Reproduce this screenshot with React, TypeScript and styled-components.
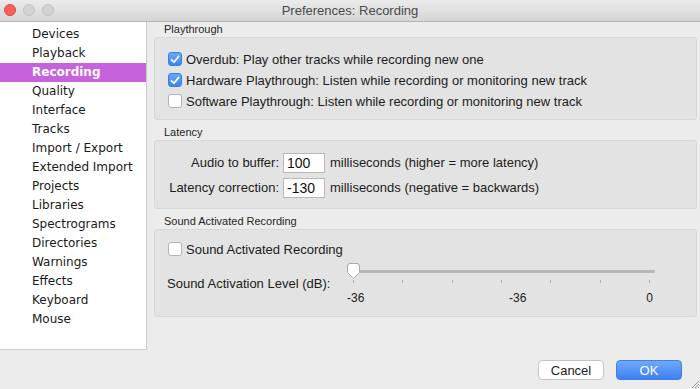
import React from "react";
import styled, { createGlobalStyle } from "styled-components";

const Global = createGlobalStyle`
  html, body { margin: 0; padding: 0; }
  body { background: #ececec; font-family: "Liberation Sans", Arial, sans-serif; }
`;

const Window = styled.div`
  position: relative;
  width: 700px;
  height: 389px;
  background: #ececec;
  display: flex;
  flex-direction: column;
  overflow: hidden;
`;

const TitleBar = styled.div`
  position: relative;
  height: 21px;
  flex: none;
  display: flex;
  align-items: center;
  justify-content: center;
  background: linear-gradient(#ebebeb, #d5d5d5);
  border-bottom: 1px solid #b4b4b4;
  font-size: 13px;
  color: #4a4a4a;
`;

const Lights = styled.div`
  position: absolute;
  left: 4px;
  top: 4px;
  display: flex;
  gap: 7px;
`;

const Light = styled.span<{ $color: string; $ring: string }>`
  width: 12px;
  height: 12px;
  border-radius: 50%;
  box-sizing: border-box;
  background: ${(p) => p.$color};
  border: 1px solid ${(p) => p.$ring};
`;

const Main = styled.div`
  display: flex;
  height: 328px;
  flex: none;
`;

const Sidebar = styled.ul`
  list-style: none;
  margin: 0;
  padding: 3px 0 0 0;
  width: 146px;
  flex: none;
  background: #fff;
  border-right: 1px solid #c9c9c9;
  border-bottom: 1px solid #c9c9c9;
  box-sizing: content-box;
  height: 324px;
`;

const Item = styled.li<{ $active?: boolean }>`
  height: 19px;
  line-height: 19px;
  padding-left: 32px;
  font-family: "DejaVu Sans", Verdana, sans-serif;
  font-size: 12px;
  color: ${(p) => (p.$active ? "#fff" : "#1a1a1a")};
  font-weight: ${(p) => (p.$active ? "bold" : "normal")};
  background: ${(p) => (p.$active ? "#c663dc" : "transparent")};
`;

const Content = styled.div`
  flex: 1;
  padding: 1px 3px 0 7px;
  display: flex;
  flex-direction: column;
`;

const GroupLabel = styled.div<{ $gap?: number }>`
  height: 13px;
  line-height: 13px;
  margin-top: ${(p) => p.$gap ?? 0}px;
  padding-left: 10px;
  font-size: 11px;
  color: #262626;
`;

const Box = styled.div<{ $h: number; $pt: number }>`
  height: ${(p) => p.$h}px;
  box-sizing: border-box;
  margin-top: 1px;
  padding: ${(p) => p.$pt}px 0 0 13px;
  background: #e3e3e3;
  border: 1px solid #d8d8d8;
  border-radius: 3px;
  display: flex;
  flex-direction: column;
  gap: 1px;
`;

const CheckRow = styled.label`
  display: flex;
  align-items: center;
  height: 20px;
  gap: 4px;
  font-size: 13px;
  color: #1c1c1c;
`;

const Check = styled.span<{ $on?: boolean }>`
  width: 14px;
  height: 14px;
  box-sizing: border-box;
  border-radius: 3px;
  display: flex;
  align-items: center;
  justify-content: center;
  background: ${(p) => (p.$on ? "linear-gradient(#6aa9f9, #3a85f1)" : "#fff")};
  border: 1px solid ${(p) => (p.$on ? "#3a7fe0" : "#b4b4b4")};
`;

const LatencyGrid = styled.div`
  display: grid;
  grid-template-columns: 113px 42px auto;
  grid-auto-rows: 21px;
  row-gap: 4px;
  column-gap: 4px;
  align-items: center;
  font-size: 13px;
  color: #1c1c1c;
  margin-left: -2px;
`;

const FieldLabel = styled.span`
  text-align: right;
  white-space: nowrap;
`;

const Field = styled.span`
  height: 20px;
  box-sizing: border-box;
  background: #fff;
  border: 1px solid #b9b9b9;
  padding-left: 3px;
  line-height: 18px;
  font-size: 14px;
  color: #111;
`;

const Unit = styled.span`
  margin-left: 1px;
  white-space: nowrap;
`;

const SliderRow = styled.div`
  display: flex;
  align-items: flex-start;
  margin-top: 2px;
  font-size: 13px;
  color: #1c1c1c;
`;

const SliderLabel = styled.span`
  width: 180px;
  flex: none;
  padding-top: 14px;
  margin-left: -1px;
`;

const Slider = styled.div`
  position: relative;
  width: 312px;
  height: 46px;
`;

const Track = styled.div`
  position: absolute;
  left: 5px;
  right: 4px;
  top: 8px;
  height: 3px;
  border-radius: 2px;
  background: #b7b7b7;
`;

const Thumb = styled.svg`
  position: absolute;
  left: 0;
  top: 1px;
`;

const Tick = styled.span`
  position: absolute;
  top: 18px;
  width: 1px;
  height: 3px;
  background: #b0b0b0;
`;

const TickLabel = styled.span`
  position: absolute;
  top: 29px;
  font-size: 12px;
  color: #1c1c1c;
`;

const Footer = styled.div`
  display: flex;
  justify-content: flex-end;
  gap: 12px;
  padding: 10px 18px 0 0;
`;

const Button = styled.button<{ $primary?: boolean }>`
  width: 66px;
  height: 20px;
  box-sizing: border-box;
  border-radius: 4px;
  font-family: "Liberation Sans", Arial, sans-serif;
  font-size: 13px;
  padding: 0;
  color: ${(p) => (p.$primary ? "#fff" : "#1c1c1c")};
  background: ${(p) => (p.$primary ? "linear-gradient(#6eaafb, #3d80f3)" : "#fff")};
  border: 1px solid ${(p) => (p.$primary ? "#3f7fe6" : "#c4c4c4")};
`;

const Grip = styled.svg`
  position: absolute;
  right: 0;
  bottom: 0;
`;

const items = [
  "Devices",
  "Playback",
  "Recording",
  "Quality",
  "Interface",
  "Tracks",
  "Import / Export",
  "Extended Import",
  "Projects",
  "Libraries",
  "Spectrograms",
  "Directories",
  "Warnings",
  "Effects",
  "Keyboard",
  "Mouse",
];

const Tickmark = () => (
  <svg width="10" height="9" viewBox="0 0 10 9">
    <path d="M1.5 4.8 L4 7.2 L8.6 1.5" fill="none" stroke="#fff" strokeWidth="1.8" strokeLinecap="round" strokeLinejoin="round" />
  </svg>
);

const CheckBox = ({ on, children }: { on?: boolean; children: React.ReactNode }) => (
  <CheckRow>
    <Check $on={on}>{on && <Tickmark />}</Check>
    {children}
  </CheckRow>
);

export default function App() {
  const ticks = Array.from({ length: 7 }, (_, i) => 6 + i * 49.3);
  return (
    <>
      <Global />
      <Window>
        <TitleBar>
          <Lights>
            <Light $color="#fc5f57" $ring="#e0443e" />
            <Light $color="#d3d3d3" $ring="#c2c2c2" />
            <Light $color="#d3d3d3" $ring="#c2c2c2" />
          </Lights>
          Preferences: Recording
        </TitleBar>
        <Main>
          <Sidebar>
            {items.map((t) => (
              <Item key={t} $active={t === "Recording"}>
                {t}
              </Item>
            ))}
          </Sidebar>
          <Content>
            <GroupLabel>Playthrough</GroupLabel>
            <Box $h={83} $pt={11}>
              <CheckBox on>Overdub: Play other tracks while recording new one</CheckBox>
              <CheckBox on>Hardware Playthrough: Listen while recording or monitoring new track</CheckBox>
              <CheckBox>Software Playthrough: Listen while recording or monitoring new track</CheckBox>
            </Box>
            <GroupLabel $gap={6}>Latency</GroupLabel>
            <Box $h={69} $pt={11}>
              <LatencyGrid>
                <FieldLabel>Audio to buffer:</FieldLabel>
                <Field>100</Field>
                <Unit>milliseconds (higher = more latency)</Unit>
                <FieldLabel>Latency correction:</FieldLabel>
                <Field>-130</Field>
                <Unit>milliseconds (negative = backwards)</Unit>
              </LatencyGrid>
            </Box>
            <GroupLabel $gap={6}>Sound Activated Recording</GroupLabel>
            <Box $h={88} $pt={9}>
              <CheckBox>Sound Activated Recording</CheckBox>
              <SliderRow>
                <SliderLabel>Sound Activation Level (dB):</SliderLabel>
                <Slider>
                  <Track />
                  {ticks.map((x, i) => (
                    <Tick key={i} style={{ left: x }} />
                  ))}
                  <Thumb width="13" height="17" viewBox="0 0 13 17">
                    <path
                      d="M3 0.5 H10 Q12.5 0.5 12.5 3 V9.5 L6.5 15.5 L0.5 9.5 V3 Q0.5 0.5 3 0.5 Z"
                      fill="#fff"
                      stroke="#a9a9a9"
                    />
                  </Thumb>
                  <TickLabel style={{ left: 0 }}>-36</TickLabel>
                  <TickLabel style={{ left: 162 }}>-36</TickLabel>
                  <TickLabel style={{ right: 6 }}>0</TickLabel>
                </Slider>
              </SliderRow>
            </Box>
          </Content>
        </Main>
        <Footer>
          <Button>Cancel</Button>
          <Button $primary>OK</Button>
        </Footer>
        <Grip width="11" height="11" viewBox="0 0 11 11">
          <path d="M10 3 L3 10 M10 6 L6 10 M10 9 L9 10" stroke="#9a9a9a" strokeWidth="1" />
        </Grip>
      </Window>
    </>
  );
}
